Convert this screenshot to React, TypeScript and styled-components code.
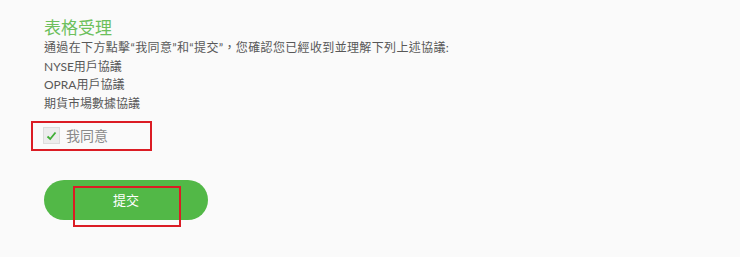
import styled, { createGlobalStyle } from "styled-components";

const GlobalStyle = createGlobalStyle`
  html, body {
    margin: 0;
    padding: 0;
    background: #fafafa;
  }
  body {
    font-family: Lato, "Noto Sans CJK TC", sans-serif;
  }
`;

const Page = styled.div`
  height: 257px;
  padding: 17px 0 0 44px;
  box-sizing: border-box;
  background: #fafafa;
`;

const Title = styled.h2`
  margin: 0;
  font-size: 17px;
  line-height: 22px;
  font-weight: 400;
  color: #6cc05c;
`;

const Terms = styled.div`
  font-size: 12px;
  line-height: 18.7px;
  color: #585858;
`;

const Line = styled.div<{ $spread?: number }>`
  white-space: nowrap;
  letter-spacing: ${(p) => p.$spread ?? 0}px;
`;

const AgreeBox = styled.label`
  display: inline-flex;
  align-items: center;
  gap: 6px;
  margin: 7px 0 0 -13px;
  padding: 2px 42px 2px 10px;
  border: 2.5px solid #db1c24;
  cursor: pointer;
`;

const Check = styled.span`
  display: flex;
  align-items: center;
  justify-content: center;
  width: 17px;
  height: 17px;
  box-sizing: border-box;
  background: #ececec;
  border: 1px solid #dcdcdc;
`;

const Label = styled.span`
  font-size: 14px;
  line-height: 22px;
  color: #8a8a8a;
`;

const Submit = styled.button`
  position: relative;
  display: block;
  margin-top: 29px;
  width: 164px;
  height: 40px;
  border: none;
  border-radius: 20px;
  background: #52b847;
  color: #fff;
  font-family: Lato, "Noto Sans CJK TC", sans-serif;
  font-size: 13px;
  cursor: pointer;
`;

const Mark = styled.span`
  position: absolute;
  left: 29px;
  top: 6px;
  width: 108px;
  height: 41px;
  box-sizing: border-box;
  border: 2.5px solid #db1c24;
`;

export default function App() {
  return (
    <>
      <GlobalStyle />
      <Page>
        <Title>表格受理</Title>
        <Terms>
          <Line $spread={0.35}>通過在下方點擊“我同意”和“提交”，您確認您已經收到並理解下列上述協議:</Line>
          <Line>NYSE用戶協議</Line>
          <Line>OPRA用戶協議</Line>
          <Line>期貨市場數據協議</Line>
        </Terms>
        <AgreeBox>
          <Check>
            <svg width="11" height="10" viewBox="0 0 11 10">
              <path d="M1.5 5.5 L4.2 8 L9.5 1.5" fill="none" stroke="#3fae35" strokeWidth="1.8" />
            </svg>
          </Check>
          <Label>我同意</Label>
        </AgreeBox>
        <Submit>
          提交
          <Mark />
        </Submit>
      </Page>
    </>
  );
}
